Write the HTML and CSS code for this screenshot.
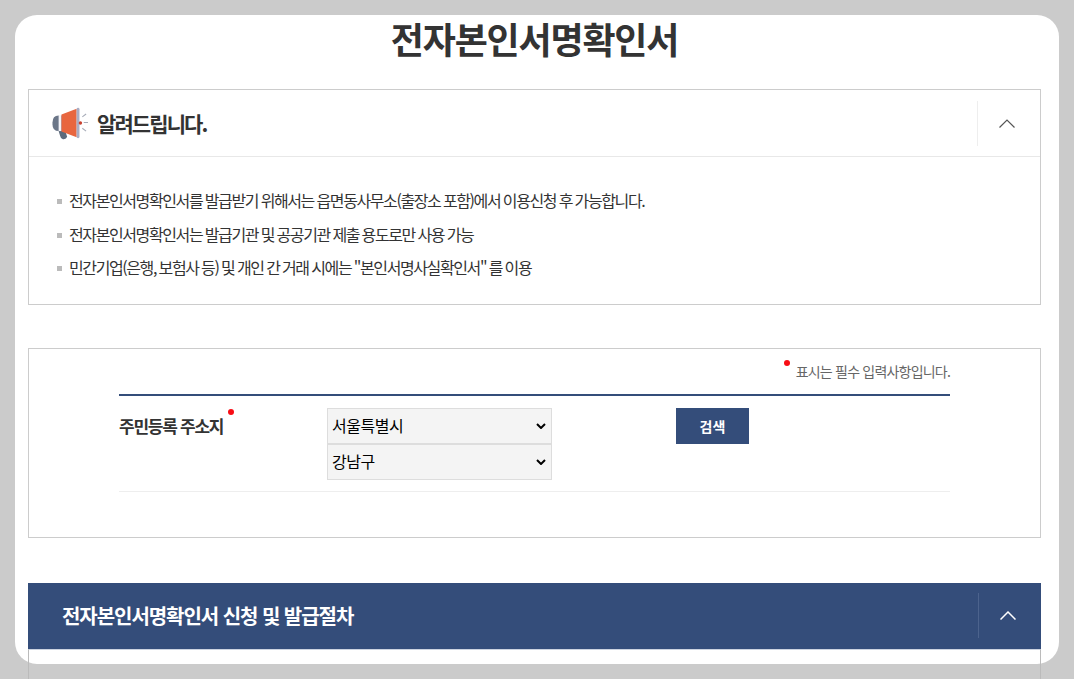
FILE: index.html
```html
<!DOCTYPE html>
<html lang="ko">
<head>
    <meta charset="UTF-8">
    <title>전자본인서명확인서</title>
    <link rel="stylesheet" href="styles.css">
</head>
<body>
    <div class="modal">
        <h1 class="page-title">전자본인서명확인서</h1>

        <div class="notice">
            <div class="notice-head">
                <svg class="notice-icon" width="36" height="33" viewBox="0 0 38 34">
                    <path d="M0.500 16 Q0.500 8.500 7 8.500 L11 8.500 L11 25 L7 25 Q0.500 25 0.500 18Z" fill="#6b7688"/>
                    <path d="M7 25 L14 25 L16 31 Q15 34 11.500 33.500 Q9 33 8.500 30Z" fill="#5d6b7c"/>
                    <rect x="7" y="8" width="3" height="17" fill="#f4f4f8"/>
                    <path d="M10 7.500 L26 1.500 L26 31.500 L10 25.500Z" fill="#e8663f"/>
                    <rect x="26" y="0.500" width="3" height="32" rx="1.500" fill="#a9adc4"/>
                    <circle cx="30" cy="16.500" r="1.800" fill="#c9402f"/>
                    <path d="M32 10 L36 7 M33.500 16 L38 16 M32 22 L36 25" stroke="#a6abb8" stroke-width="1.100" fill="none"/>
                </svg>
                <h2 class="notice-title">알려드립니다.</h2>
                <div class="toggle">
                    <svg width="16" height="9" viewBox="0 0 16 9"><path d="M0.500 8.500 L8 1 L15.500 8.500" fill="none" stroke="#555" stroke-width="1.200"/></svg>
                </div>
            </div>
            <ul class="notice-list">
                <li>전자본인서명확인서를 발급받기 위해서는 읍면동사무소(출장소 포함)에서 이용신청 후 가능합니다.</li>
                <li>전자본인서명확인서는 발급기관 및 공공기관 제출 용도로만 사용 가능</li>
                <li>민간기업(은행, 보험사 등) 및 개인 간 거래 시에는 "본인서명사실확인서" 를 이용</li>
            </ul>
        </div>

        <div class="form-box">
            <div class="form-inner">
                <p class="req-note"><span class="dot"></span>표시는 필수 입력사항입니다.</p>
                <div class="form-row">
                    <div class="form-label">주민등록 주소지<span class="dot"></span></div>
                    <div class="select-col">
                        <select class="addr-select"><option>서울특별시</option></select>
                        <select class="addr-select"><option>강남구</option></select>
                    </div>
                    <button class="search-btn">검색</button>
                </div>
            </div>
        </div>

        <div class="steps">
            <div class="steps-head">
                <h2 class="steps-title">전자본인서명확인서 신청 및 발급절차</h2>
                <div class="toggle toggle-dark">
                    <svg width="16" height="9" viewBox="0 0 16 9"><path d="M0.500 8.500 L8 1 L15.500 8.500" fill="none" stroke="#fff" stroke-width="1.500"/></svg>
                </div>
            </div>
            <div class="steps-body"></div>
        </div>
    </div>
</body>
</html>
```

FILE: styles.css
```css
* {
    margin: 0;
    padding: 0;
    box-sizing: border-box;
}

html, body {
    height: 679px;
    overflow: hidden;
}

body {
    background-color: #cbcbcb;
    font-family: "Noto Sans CJK KR", "Noto Sans", sans-serif;
    color: #333;
    padding: 15px;
}

.modal {
    width: 1044px;
    height: 649px;
    padding: 0 18px 0 13px;
    background-color: #fff;
    border-radius: 22px;
}

.page-title {
    height: 74px;
    font-size: 36px;
    line-height: 47px;
    font-weight: 700;
    letter-spacing: -1.200px;
    text-align: center;
    color: #333;
}

.notice {
    border: 1px solid #ccc;
}

.notice-head {
    display: flex;
    align-items: center;
    height: 67px;
    padding-left: 23px;
    border-bottom: 1px solid #e8e8e8;
}

.notice-icon {
    margin-right: 9px;
}

.notice-title {
    flex: 1;
    font-size: 21px;
    font-weight: 700;
    letter-spacing: -1.900px;
    color: #333;
}

.toggle {
    display: flex;
    align-items: center;
    justify-content: center;
    width: 63px;
    height: 45px;
    padding-right: 4px;
    border-left: 1px solid #eee;
}

.notice-list {
    list-style: none;
    padding: 27px 28px 19px;
}

.notice-list li {
    position: relative;
    padding-left: 12px;
    font-size: 16px;
    line-height: 33.500px;
    letter-spacing: -1.400px;
    word-spacing: -0.500px;
    color: #333;
}

.notice-list li::before {
    content: '';
    position: absolute;
    left: 0;
    top: 15px;
    width: 5px;
    height: 5px;
    background-color: #bbb;
}

.form-box {
    height: 190px;
    margin-top: 43px;
    padding: 0 90px;
    border: 1px solid #ccc;
}

.req-note {
    height: 45px;
    padding-top: 10px;
    font-size: 14px;
    line-height: 24px;
    letter-spacing: -0.800px;
    text-align: right;
    color: #666;
}

.dot {
    display: inline-block;
    width: 6px;
    height: 6px;
    border-radius: 50%;
    background-color: #f80d15;
    vertical-align: 11px;
}

.req-note .dot {
    margin-right: 6px;
}

.form-row {
    display: flex;
    height: 98px;
    padding-top: 12px;
    border-top: 2px solid #344d7a;
    border-bottom: 1px solid #eee;
}

.form-label {
    width: 208px;
    font-size: 17px;
    font-weight: 700;
    line-height: 36px;
    letter-spacing: -1.250px;
    color: #333;
}

.form-label .dot {
    margin-left: 5px;
    vertical-align: 18px;
}

.select-col {
    display: flex;
    flex-direction: column;
    width: 349px;
}

.addr-select {
    appearance: none;
    width: 225px;
    height: 36px;
    padding: 0 20px 2px 4px;
    border: 1px solid #ddd;
    border-radius: 0;
    background: #f4f4f4 url("data:image/svg+xml,%3Csvg xmlns='http://www.w3.org/2000/svg' width='10' height='6'%3E%3Cpath d='M1 1 L5 5 L9 1' fill='none' stroke='%23000' stroke-width='2'/%3E%3C/svg%3E") no-repeat right 5px center;
    font-family: "Noto Sans CJK KR", sans-serif;
    font-size: 16px;
    letter-spacing: -0.500px;
    color: #000;
}

.search-btn {
    width: 73px;
    height: 36px;
    border: none;
    background-color: #344d7a;
    color: #fff;
    font-family: "Noto Sans CJK KR", sans-serif;
    font-size: 14px;
    font-weight: 700;
}

.steps {
    margin-top: 45px;
}

.steps-head {
    display: flex;
    align-items: center;
    height: 66px;
    padding-left: 34px;
    background-color: #344d7a;
}

.steps-title {
    flex: 1;
    font-size: 20px;
    font-weight: 700;
    letter-spacing: -1.050px;
    color: #fff;
}

.toggle-dark {
    border-left-color: #4c638d;
}

.steps-body {
    height: 60px;
    border: 1px solid #bbb;
    border-top-color: #ccd3e0;
}
```
